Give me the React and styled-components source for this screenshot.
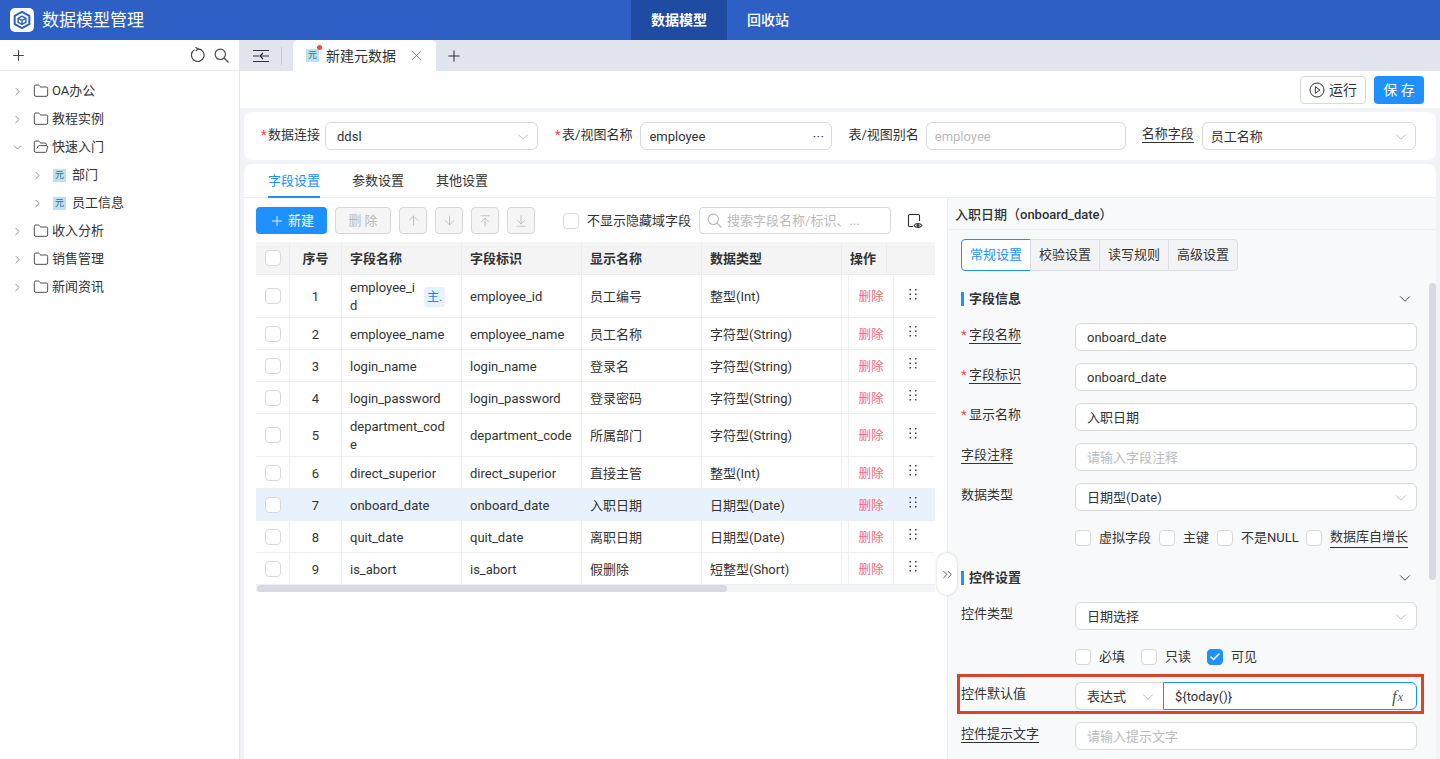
import React from "react";
import styled, { createGlobalStyle } from "styled-components";
import {
  ArrowDown,
  ArrowDownToLine,
  ArrowUp,
  ArrowUpToLine,
  Check,
  ChevronDown,
  ChevronRight,
  ChevronsRight,
  Folder,
  FolderOpen,
  Plus,
  X,
} from "lucide-react";

const GlobalStyle = createGlobalStyle`
  html, body {
    margin: 0;
    height: 759px;
    overflow: hidden;
    background: #fff;
    font-family: Roboto, "Noto Sans CJK SC", sans-serif;
    font-size: 13px;
    line-height: 18px;
    color: #333;
  }
  * { box-sizing: border-box; }
`;

const treeItems = [
  { name: "OA办公" },
  { name: "教程实例" },
  { name: "快速入门", open: true },
  { name: "部门", child: true },
  { name: "员工信息", child: true },
  { name: "收入分析" },
  { name: "销售管理" },
  { name: "新闻资讯" },
];

const fields = [
  { no: 1, name: "employee_id", id: "employee_id", label: "员工编号", type: "整型(Int)", pk: true },
  { no: 2, name: "employee_name", id: "employee_name", label: "员工名称", type: "字符型(String)" },
  { no: 3, name: "login_name", id: "login_name", label: "登录名", type: "字符型(String)" },
  { no: 4, name: "login_password", id: "login_password", label: "登录密码", type: "字符型(String)" },
  { no: 5, name: "department_code", id: "department_code", label: "所属部门", type: "字符型(String)", tall: true },
  { no: 6, name: "direct_superior", id: "direct_superior", label: "直接主管", type: "整型(Int)" },
  { no: 7, name: "onboard_date", id: "onboard_date", label: "入职日期", type: "日期型(Date)", active: true },
  { no: 8, name: "quit_date", id: "quit_date", label: "离职日期", type: "日期型(Date)" },
  { no: 9, name: "is_abort", id: "is_abort", label: "假删除", type: "短整型(Short)" },
];

function SearchGlyph({ color = "#444", size = 15 }) {
  return (
    <svg width={size} height={size} viewBox="0 0 15 15" fill="none" stroke={color} strokeWidth="1.200">
      <circle cx="6.300" cy="6.300" r="5.200" />
      <path d="M10 10l4.500 4.500" />
    </svg>
  );
}

function App() {
  return (
    <Page>
      <GlobalStyle />
      <Header>
        <Brand>
          <LogoBox>
            <svg width="20" height="20" viewBox="0 0 24 24" fill="none" stroke="#2d5fc4" strokeWidth="2.4" strokeLinejoin="round">
              <path d="M12 2.2 20.8 7v10L12 21.8 3.2 17V7z" />
              <path d="M12 7.4 16.6 10v4.8L12 17.2l-4.600-2.400V10z" strokeWidth="1.800" />
              <path d="M7.400 10 12 12.400 16.600 10M12 12.400v4.800" strokeWidth="1.800" />
            </svg>
          </LogoBox>
          <BrandTitle>数据模型管理</BrandTitle>
        </Brand>
        <Nav>
          <NavItem $active>数据模型</NavItem>
          <NavItem>回收站</NavItem>
        </Nav>
      </Header>
      <Body>
        <Sidebar>
          <SideTools>
            <Plus size={17} strokeWidth={1.5} />
            <SideToolsRight>
              <svg width="16" height="16" viewBox="0 0 16 16" fill="none" stroke="#444" strokeWidth="1.200">
                <path d="M5.500 2.800a6.300 6.300 0 1 0 3.500-.9" />
                <path d="M6.400 0.300 9 1.900 6.800 4" />
              </svg>
              <SearchGlyph />
            </SideToolsRight>
          </SideTools>
          <Tree>
            {treeItems.map((item) => (
              <TreeRow key={item.name} $child={item.child}>
                <TreeArrow>
                  {item.open ? (
                    <ChevronDown size={13} strokeWidth={1.3} />
                  ) : (
                    <ChevronRight size={13} strokeWidth={1.3} />
                  )}
                </TreeArrow>
                {item.child ? (
                  <DocIcon>元</DocIcon>
                ) : item.open ? (
                  <FolderOpen size={16} strokeWidth={1.3} />
                ) : (
                  <Folder size={16} strokeWidth={1.3} />
                )}
                <TreeText $child={item.child}>{item.name}</TreeText>
              </TreeRow>
            ))}
          </Tree>
        </Sidebar>
        <Main>
          <TabBar>
            <CollapseBtn>
              <svg width="16" height="14" viewBox="0 0 16 14" fill="none" stroke="#333" strokeWidth="1.200">
                <path d="M0 1.500h16M0 12.500h16M0 7h6M16 7H7M10 4 7 7l3 3" />
              </svg>
            </CollapseBtn>
            <TabDivider />
            <OpenTab>
              <TabDoc>
                <DocIcon>元</DocIcon>
                <RedDot />
              </TabDoc>
              <OpenTabText>新建元数据</OpenTabText>
              <X size={17} strokeWidth={1.1} color="#777" />
            </OpenTab>
            <AddTab>
              <Plus size={18} strokeWidth={1.4} />
            </AddTab>
          </TabBar>
          <ActionBar>
            <RunButton>
              <svg width="16" height="16" viewBox="0 0 16 16" fill="none" stroke="#333" strokeWidth="1">
                <circle cx="8" cy="8" r="7" />
                <path d="M6.300 4.800 11 8l-4.700 3.200z" />
              </svg>
              运行
            </RunButton>
            <SaveButton>保 存</SaveButton>
          </ActionBar>
          <FormCard>
            <FormLabel>
              <Star>*</Star>数据连接
            </FormLabel>
            <SelectBox $width={213} $pl={11}>
              ddsl
              <ChevronDown size={18} strokeWidth={0.9} color="#999" />
            </SelectBox>
            <FormLabel $ml={17}>
              <Star>*</Star>表/视图名称
            </FormLabel>
            <SelectBox $width={192} $ml={8}>
              employee
              <Dots>···</Dots>
            </SelectBox>
            <FormLabel $ml={16}>表/视图别名</FormLabel>
            <SelectBox $width={200} $ml={7} $placeholder>
              employee
            </SelectBox>
            <FormLabel $ml={16} $underline>
              名称字段
            </FormLabel>
            <SelectBox $width={214} $ml={8}>
              员工名称
              <ChevronDown size={18} strokeWidth={0.9} color="#999" />
            </SelectBox>
          </FormCard>
          <ContentCard>
            <ContentTabs>
              <ContentTab $active>字段设置</ContentTab>
              <ContentTab>参数设置</ContentTab>
              <ContentTab>其他设置</ContentTab>
            </ContentTabs>
            <Split>
              <LeftPane>
                <Toolbar>
                  <PrimaryButton>
                    <Plus size={16} strokeWidth={1.300} />
                    新建
                  </PrimaryButton>
                  <DisabledButton>删 除</DisabledButton>
                  <IconButton>
                    <ArrowUp size={15} strokeWidth={1.100} />
                  </IconButton>
                  <IconButton>
                    <ArrowDown size={15} strokeWidth={1.100} />
                  </IconButton>
                  <IconButton>
                    <ArrowUpToLine size={14} strokeWidth={1.100} />
                  </IconButton>
                  <IconButton>
                    <ArrowDownToLine size={14} strokeWidth={1.100} />
                  </IconButton>
                  <HiddenToggle>
                    <CheckBox />
                    不显示隐藏域字段
                  </HiddenToggle>
                  <SearchBox>
                    <SearchGlyph color="#bbb" />
                    搜索字段名称/标识、...
                  </SearchBox>
                  <EyeIcon>
                    <svg width="16" height="16" viewBox="0 0 16 16" fill="none" stroke="#333" strokeWidth="1.100">
                      <path d="M6 13.500H2.500a1 1 0 0 1-1-1v-10a1 1 0 0 1 1-1h9a1 1 0 0 1 1 1V8" />
                      <path d="M7 12.500c1.800-2.600 6-2.600 8 0-2 2.600-6.200 2.600-8 0z" />
                      <circle cx="11" cy="12.500" r="1" fill="#333" />
                    </svg>
                  </EyeIcon>
                </Toolbar>
                <FieldTable>
                  <HeadRow>
                    <HeadCell $center $box>
                      <CheckBox />
                    </HeadCell>
                    <HeadCell $center>序号</HeadCell>
                    <HeadCell>字段名称</HeadCell>
                    <HeadCell>字段标识</HeadCell>
                    <HeadCell>显示名称</HeadCell>
                    <HeadCell>数据类型</HeadCell>
                    <HeadCell>操作</HeadCell>
                    <HeadCell />
                  </HeadRow>
                  {fields.map((f) => (
                    <BodyRow key={f.no} $active={f.active} $tall={f.pk || f.tall}>
                      <Cell $center $box>
                        <CheckBox />
                      </Cell>
                      <Cell $center>{f.no}</Cell>
                      <Cell>
                        <NameText $narrow={f.pk}>{f.name}</NameText>
                        {f.pk && <PkTag>主.</PkTag>}
                      </Cell>
                      <Cell>{f.id}</Cell>
                      <Cell>{f.label}</Cell>
                      <Cell>{f.type}</Cell>
                      <Cell />
                      <Cell $center>
                        <DeleteLink>删除</DeleteLink>
                      </Cell>
                      <Cell $center $box>
                        <DragDots>
                          <svg width="8" height="11" viewBox="0 0 16 22" fill="#444">
                            <rect x="1" y="0" width="3" height="3" />
                            <rect x="12" y="0" width="3" height="3" />
                            <rect x="1" y="9" width="3" height="3" />
                            <rect x="12" y="9" width="3" height="3" />
                            <rect x="1" y="18" width="3" height="3" />
                            <rect x="12" y="18" width="3" height="3" />
                          </svg>
                        </DragDots>
                      </Cell>
                    </BodyRow>
                  ))}
                </FieldTable>
                <HScroll>
                  <HThumb />
                </HScroll>
                <CollapseHandle>
                  <ChevronsRight size={15} strokeWidth={1.300} />
                </CollapseHandle>
              </LeftPane>
              <RightPane>
                <PaneTitle>入职日期（onboard_date）</PaneTitle>
                <SubTabs>
                  <SubTab $active>常规设置</SubTab>
                  <SubTab>校验设置</SubTab>
                  <SubTab>读写规则</SubTab>
                  <SubTab>高级设置</SubTab>
                </SubTabs>
                <SectionHead>
                  <SectionTitle>字段信息</SectionTitle>
                  <ChevronDown size={18} strokeWidth={1.200} />
                </SectionHead>
                <FieldRow>
                  <FieldLabel>
                    <Star>*</Star>
                    <Dashed>字段名称</Dashed>
                  </FieldLabel>
                  <TextInput>onboard_date</TextInput>
                </FieldRow>
                <FieldRow>
                  <FieldLabel>
                    <Star>*</Star>
                    <Dashed>字段标识</Dashed>
                  </FieldLabel>
                  <TextInput>onboard_date</TextInput>
                </FieldRow>
                <FieldRow>
                  <FieldLabel>
                    <Star>*</Star>显示名称
                  </FieldLabel>
                  <TextInput>入职日期</TextInput>
                </FieldRow>
                <FieldRow>
                  <FieldLabel>
                    <Dashed>字段注释</Dashed>
                  </FieldLabel>
                  <TextInput $placeholder>请输入字段注释</TextInput>
                </FieldRow>
                <FieldRow>
                  <FieldLabel>数据类型</FieldLabel>
                  <TextInput>
                    日期型(Date)
                    <ChevronDown size={18} strokeWidth={0.9} color="#999" />
                  </TextInput>
                </FieldRow>
                <CheckRow>
                  <CheckItem $width={84}>
                    <CheckBox />
                    虚拟字段
                  </CheckItem>
                  <CheckItem $width={58}>
                    <CheckBox />
                    主键
                  </CheckItem>
                  <CheckItem $width={89}>
                    <CheckBox />
                    不是NULL
                  </CheckItem>
                  <CheckItem>
                    <CheckBox />
                    <Dashed>数据库自增长</Dashed>
                  </CheckItem>
                </CheckRow>
                <SectionHead $tight>
                  <SectionTitle>控件设置</SectionTitle>
                  <ChevronDown size={18} strokeWidth={1.200} />
                </SectionHead>
                <FieldRow>
                  <FieldLabel>控件类型</FieldLabel>
                  <TextInput>
                    日期选择
                    <ChevronDown size={18} strokeWidth={0.9} color="#999" />
                  </TextInput>
                </FieldRow>
                <CheckRow>
                  <CheckItem $width={66}>
                    <CheckBox />
                    必填
                  </CheckItem>
                  <CheckItem $width={66}>
                    <CheckBox />
                    只读
                  </CheckItem>
                  <CheckItem>
                    <CheckBox $checked>
                      <Check size={12} strokeWidth={3} color="#fff" />
                    </CheckBox>
                    可见
                  </CheckItem>
                </CheckRow>
                <HighlightRow>
                  <FieldLabel>控件默认值</FieldLabel>
                  <ExprGroup>
                    <ExprSelect>
                      表达式
                      <ChevronDown size={18} strokeWidth={0.9} color="#999" />
                    </ExprSelect>
                    <ExprInput>
                      {"${today()}"}
                      <FxMark>
                        f<sub>x</sub>
                      </FxMark>
                    </ExprInput>
                  </ExprGroup>
                </HighlightRow>
                <FieldRow>
                  <FieldLabel>
                    <Dashed>控件提示文字</Dashed>
                  </FieldLabel>
                  <TextInput $placeholder>请输入提示文字</TextInput>
                </FieldRow>
                <VScroll />
              </RightPane>
            </Split>
          </ContentCard>
        </Main>
      </Body>
    </Page>
  );
}

export default App;

const Page = styled.div`
  width: 1440px;
  height: 759px;
  display: flex;
  flex-direction: column;
  overflow: hidden;
`;

const Header = styled.header`
  height: 40px;
  flex: none;
  display: flex;
  background: #2d5fc4;
  color: #fff;
  position: relative;
`;

const Brand = styled.div`
  width: 631px;
  display: flex;
  align-items: center;
  padding-left: 10px;
  gap: 8px;
`;

const LogoBox = styled.div`
  width: 24px;
  height: 24px;
  border-radius: 5px;
  background: #fff;
  display: flex;
  align-items: center;
  justify-content: center;
`;

const BrandTitle = styled.div`
  font-size: 17px;
  letter-spacing: 0;
`;

const Nav = styled.nav`
  display: flex;
`;

const NavItem = styled.div`
  width: ${(p) => (p.$active ? "96px" : "82px")};
  display: flex;
  align-items: center;
  justify-content: center;
  font-size: 14px;
  font-weight: ${(p) => (p.$active ? 600 : 500)};
  background: ${(p) => (p.$active ? "#1f4ba3" : "transparent")};
`;

const Body = styled.div`
  flex: 1;
  display: flex;
  min-height: 0;
`;

const Sidebar = styled.aside`
  width: 240px;
  flex: none;
  background: #fff;
  border-right: 1px solid #e5e7ec;
`;

const SideTools = styled.div`
  height: 31px;
  display: flex;
  align-items: center;
  justify-content: space-between;
  padding: 0 10px;
  border-bottom: 1px solid #e8eaee;
  color: #444;
`;

const SideToolsRight = styled.div`
  display: flex;
  align-items: center;
  gap: 9px;
`;

const Tree = styled.div`
  padding-top: 6px;
`;

const TreeRow = styled.div`
  height: 28px;
  display: flex;
  align-items: center;
  padding-left: ${(p) => (p.$child ? "31px" : "11px")};
  color: #333;
`;

const TreeArrow = styled.span`
  width: 22px;
  flex: none;
  display: flex;
  color: #666;
`;

const TreeText = styled.span`
  margin-left: ${(p) => (p.$child ? "6px" : "3px")};
`;

const DocIcon = styled.span`
  width: 13px;
  height: 13px;
  flex: none;
  display: inline-flex;
  align-items: center;
  justify-content: center;
  background: #bfe0f3;
  color: #2b6ca8;
  font-size: 9px;
  line-height: 1;
`;

const Main = styled.main`
  flex: 1;
  min-width: 0;
  display: flex;
  flex-direction: column;
  background: #f1f3f7;
`;

const TabBar = styled.div`
  height: 31px;
  flex: none;
  display: flex;
  align-items: center;
  background: #e2e5ee;
`;

const CollapseBtn = styled.div`
  margin-left: 13px;
  display: flex;
`;

const TabDivider = styled.span`
  width: 1px;
  height: 18px;
  margin: 0 11px 0 12px;
  background: #c4c7cf;
`;

const OpenTab = styled.div`
  width: 143px;
  height: 31px;
  display: flex;
  align-items: center;
  padding-left: 13px;
  background: #fff;
  border-radius: 5px 5px 0 0;
`;

const OpenTabText = styled.span`
  margin: 0 12px 0 7px;
  font-size: 14px;
`;

const TabDoc = styled.span`
  position: relative;
  display: flex;
`;

const RedDot = styled.i`
  position: absolute;
  top: -4px;
  right: -3px;
  width: 5px;
  height: 5px;
  border-radius: 50%;
  background: #f5483b;
`;

const AddTab = styled.div`
  margin-left: 9px;
  display: flex;
`;

const ActionBar = styled.div`
  height: 37px;
  flex: none;
  display: flex;
  align-items: center;
  justify-content: flex-end;
  gap: 8px;
  padding-right: 16px;
  background: #fff;
`;

const RunButton = styled.div`
  width: 66px;
  height: 28px;
  display: flex;
  align-items: center;
  justify-content: center;
  gap: 4px;
  border: 1px solid #d9d9d9;
  border-radius: 4px;
  background: #fff;
  font-size: 14px;
`;

const SaveButton = styled.div`
  width: 50px;
  height: 28px;
  display: flex;
  align-items: center;
  justify-content: center;
  border-radius: 4px;
  background: #1e90ff;
  color: #fff;
  font-size: 14px;
`;

const FormCard = styled.section`
  height: 48px;
  flex: none;
  margin: 4px 4px 4px 4px;
  display: flex;
  align-items: center;
  padding-left: 17px;
  background: #fff;
  border-radius: 8px;
`;

const FormLabel = styled.label`
  flex: none;
  margin-left: ${(p) => p.$ml || 0}px;
  margin-right: ${(p) => (p.$ml ? 0 : 5)}px;
  margin-top: -3px;
  ${(p) => p.$underline && "border-bottom: 1px solid #333; line-height: 16px;"}
`;

const Star = styled.span`
  display: inline-block;
  width: 7px;
  color: #f5483b;
`;

const SelectBox = styled.div`
  width: ${(p) => p.$width}px;
  margin-left: ${(p) => p.$ml || 0}px;
  height: 28px;
  flex: none;
  display: flex;
  align-items: center;
  justify-content: space-between;
  padding: 2px 5px 0 ${(p) => p.$pl || 8}px;
  border: 1px solid #d9d9d9;
  border-radius: 6px;
  background: #fff;
  color: ${(p) => (p.$placeholder ? "#bbb" : "#333")};
`;

const Dots = styled.span`
  letter-spacing: 0.5px;
  margin-right: 2px;
`;

const ContentCard = styled.section`
  flex: 1;
  min-height: 0;
  margin: 0 4px;
  background: #fff;
  border-radius: 8px 8px 0 0;
  display: flex;
  flex-direction: column;
`;

const ContentTabs = styled.div`
  height: 34px;
  flex: none;
  display: flex;
  gap: 32px;
  padding-left: 24px;
  border-bottom: 1px solid #eceef2;
`;

const ContentTab = styled.div`
  height: 34px;
  display: flex;
  align-items: center;
  padding-top: 2px;
  color: ${(p) => (p.$active ? "#1e90ff" : "#333")};
  border-bottom: 2px solid ${(p) => (p.$active ? "#1e90ff" : "transparent")};
`;

const Split = styled.div`
  flex: 1;
  min-height: 0;
  display: flex;
`;

const LeftPane = styled.div`
  width: 703px;
  flex: none;
  padding: 9px 0 0 12px;
  position: relative;
  z-index: 2;
`;

const Toolbar = styled.div`
  height: 27px;
  display: flex;
  align-items: center;
  gap: 8px;
`;

const PrimaryButton = styled.div`
  width: 71px;
  height: 27px;
  display: flex;
  align-items: center;
  justify-content: center;
  gap: 3px;
  border-radius: 4px;
  background: #1e90ff;
  color: #fff;
`;

const DisabledButton = styled.div`
  width: 56px;
  height: 27px;
  display: flex;
  align-items: center;
  justify-content: center;
  border: 1px solid #d9d9d9;
  border-radius: 4px;
  background: #f5f5f5;
  color: #bbb;
`;

const IconButton = styled(DisabledButton)`
  width: 28px;
  color: #aaa;
`;

const CheckBox = styled.span`
  width: 16px;
  height: 16px;
  flex: none;
  display: inline-flex;
  align-items: center;
  justify-content: center;
  border: 1px solid ${(p) => (p.$checked ? "#1e90ff" : "#d9d9d9")};
  border-radius: 4px;
  background: ${(p) => (p.$checked ? "#1e90ff" : "#fff")};
`;

const HiddenToggle = styled.div`
  display: flex;
  align-items: center;
  gap: 8px;
  margin-left: 20px;
`;

const SearchBox = styled.div`
  width: 192px;
  height: 27px;
  display: flex;
  align-items: center;
  gap: 5px;
  padding-left: 7px;
  border: 1px solid #d9d9d9;
  border-radius: 4px;
  color: #bbb;
  white-space: nowrap;
`;

const EyeIcon = styled.div`
  display: flex;
  margin-left: 8px;
`;

const FieldTable = styled.div`
  margin-top: 8px;
  width: 679px;
`;

const HeadRow = styled.div`
  display: grid;
  grid-template-columns: 34px 52px 120px 120px 120px 140px 45px 48px;
  height: 33px;
  background: #f4f4f5;
  border-bottom: 1px solid #ececef;
`;

const HeadCell = styled.div`
  display: flex;
  align-items: center;
  justify-content: ${(p) => (p.$center ? "center" : "flex-start")};
  padding: ${(p) => (p.$box ? "0" : p.$center ? "2px 0 0" : "2px 8px 0")};
  font-weight: 600;
  border-right: 1px solid #ececef;
  &:last-child {
    border-right: none;
  }
`;

const BodyRow = styled.div`
  display: grid;
  grid-template-columns: 34px 52px 120px 120px 120px 140px 7px 45px 41px;
  height: ${(p) => (p.$tall ? "43px" : "32px")};
  background: ${(p) => (p.$active ? "#e8f2fc" : "#fff")};
  border-bottom: 1px solid #eeeff2;
`;

const Cell = styled.div`
  display: flex;
  align-items: center;
  justify-content: ${(p) => (p.$center ? "center" : "flex-start")};
  padding: ${(p) => (p.$box ? "0" : p.$center ? "2px 0 0" : "2px 8px 0")};
  border-right: 1px solid #eeeff2;
  min-width: 0;
  &:nth-child(7) {
    padding: 0;
  }
  &:last-child {
    border-right: none;
  }
`;

const NameText = styled.span`
  flex: none;
  width: ${(p) => (p.$narrow ? "66px" : "100px")};
  word-break: break-all;
  line-height: 18px;
`;

const PkTag = styled.span`
  margin-left: 8px;
  width: 21px;
  height: 20px;
  flex: none;
  display: flex;
  align-items: center;
  justify-content: center;
  border-radius: 3px;
  background: #e6f2fd;
  color: #2f80ed;
  font-size: 12px;
`;

const DeleteLink = styled.span`
  color: #f56c6c;
  font-size: 12.500px;
`;

const DragDots = styled.span`
  display: flex;
  margin-top: -4px;
  margin-right: 4px;
`;

const HScroll = styled.div`
  width: 679px;
  height: 7px;
  background: #f4f5f7;
  padding-left: 1px;
`;

const HThumb = styled.div`
  width: 470px;
  height: 7px;
  border-radius: 4px;
  background: #d8dae2;
`;

const CollapseHandle = styled.div`
  position: absolute;
  left: 693px;
  top: 355px;
  width: 20px;
  height: 42px;
  display: flex;
  align-items: center;
  justify-content: center;
  background: #fff;
  border-radius: 10px;
  box-shadow: 0 0 3px rgba(0, 0, 0, 0.2);
  color: #333;
`;

const RightPane = styled.div`
  flex: 1;
  min-width: 0;
  position: relative;
  overflow: hidden;
  background: #f8f9fb;
  padding: 0 19px 0 13px;
  border-left: 1px solid #eceef2;
`;

const PaneTitle = styled.div`
  margin: 0 -19px 0 -13px;
  padding: 3px 0 0 7px;
  height: 32px;
  display: flex;
  align-items: center;
  font-size: 13px;
  font-weight: 500;
  border-bottom: 1px solid #eceef2;
`;

const SubTabs = styled.div`
  display: flex;
  margin-top: 9px;
  width: 277px;
  height: 32px;
`;

const SubTab = styled.div`
  flex: 1;
  display: flex;
  align-items: center;
  justify-content: center;
  background: ${(p) => (p.$active ? "#fff" : "#f2f3f5")};
  color: ${(p) => (p.$active ? "#1e90ff" : "#333")};
  border: 1px solid ${(p) => (p.$active ? "#1e90ff" : "#dcdfe6")};
  margin-left: -1px;
  font-size: 13px;
  &:first-child {
    border-radius: 4px 0 0 4px;
    margin-left: 0;
  }
  &:last-child {
    border-radius: 0 4px 4px 0;
  }
`;

const SectionHead = styled.div`
  height: 30px;
  margin: ${(p) => (p.$tight ? "0" : "13px")} 0 9px;
  display: flex;
  align-items: center;
  justify-content: space-between;
  padding-right: 3px;
`;

const SectionTitle = styled.div`
  font-weight: 700;
  line-height: 14px;
  padding-left: 5px;
  border-left: 3px solid #1e90ff;
`;

const FieldRow = styled.div`
  display: flex;
  height: 28px;
  margin-bottom: 12px;
  position: relative;
`;

const HighlightRow = styled(FieldRow)`
  &::after {
    content: "";
    position: absolute;
    left: -4px;
    right: -7px;
    top: -8px;
    bottom: -4px;
    border: 3px solid #d9452b;
    pointer-events: none;
  }
`;

const FieldLabel = styled.label`
  width: 114px;
  flex: none;
  line-height: 24px;
  white-space: nowrap;
  ${Star} {
    width: 8px;
  }
`;

const Dashed = styled.span`
  border-bottom: 1px solid #333;
  padding-bottom: 1px;
`;

const TextInput = styled.div`
  flex: 1;
  height: 28px;
  display: flex;
  align-items: center;
  justify-content: space-between;
  padding: 2px 6px 0 11px;
  border: 1px solid #d9d9d9;
  border-radius: 6px;
  background: #fff;
  color: ${(p) => (p.$placeholder ? "#bbb" : "#333")};
`;

const CheckRow = styled.div`
  height: 28px;
  margin: 0 0 12px 114px;
  padding-top: 2px;
  display: flex;
  align-items: center;
`;

const CheckItem = styled.div`
  display: flex;
  align-items: center;
  gap: 8px;
  white-space: nowrap;
  ${(p) => p.$width && `width: ${p.$width}px;`}
`;

const ExprGroup = styled.div`
  flex: 1;
  display: flex;
`;

const ExprSelect = styled.div`
  width: 88px;
  height: 28px;
  flex: none;
  display: flex;
  align-items: center;
  justify-content: space-between;
  padding: 2px 6px 0 11px;
  border: 1px solid #d9d9d9;
  border-right: none;
  border-radius: 6px 0 0 6px;
  background: #fff;
`;

const ExprInput = styled.div`
  flex: 1;
  height: 28px;
  display: flex;
  align-items: center;
  justify-content: space-between;
  padding: 2px 13px 0 11px;
  border: 1px solid #1e90ff;
  border-radius: 0 6px 6px 0;
  background: #fff;
`;

const FxMark = styled.i`
  font-family: "Liberation Serif", serif;
  font-size: 17px;
  color: #555;
  sub {
    font-size: 12px;
    margin-left: 1px;
    vertical-align: 1px;
  }
`;

const VScroll = styled.div`
  position: absolute;
  top: 85px;
  right: 0;
  width: 7px;
  height: 297px;
  border-radius: 4px;
  background: #d8dae2;
`;
